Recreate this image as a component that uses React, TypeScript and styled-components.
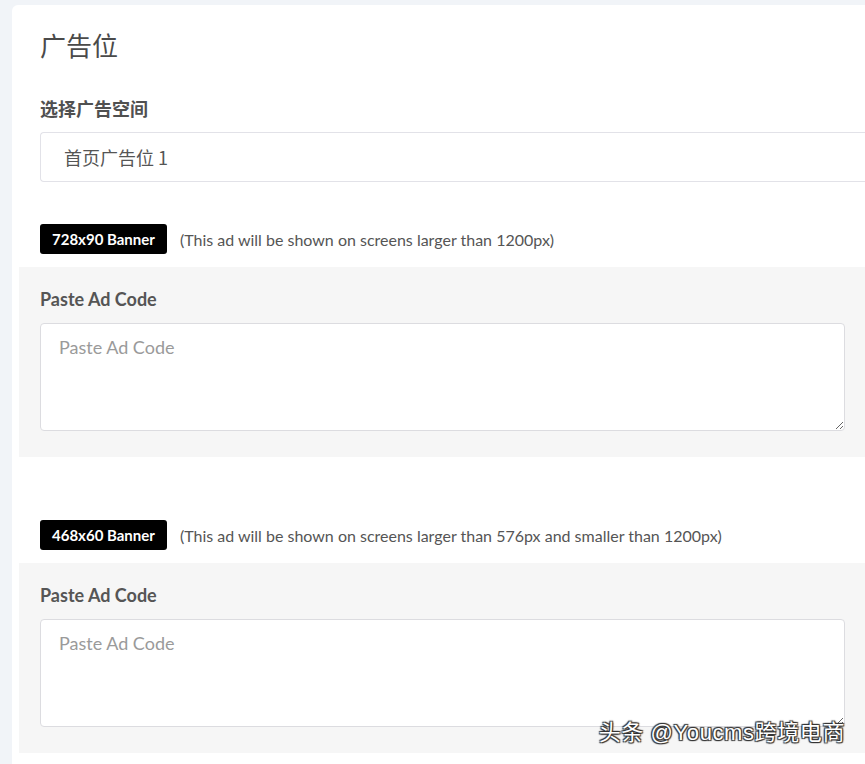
import styled, { createGlobalStyle } from "styled-components";

const GlobalStyle = createGlobalStyle`
  html, body {
    margin: 0;
    padding: 0;
    background: #f1f4f8;
    overflow: hidden;
  }
  body {
    font-family: "Lato", "Noto Sans CJK SC", sans-serif;
  }
`;

const Page = styled.div`
  width: 865px;
  height: 764px;
  position: relative;
  overflow: hidden;
  padding: 5px 0 0 12px;
  box-sizing: border-box;
`;

const Card = styled.div`
  width: 900px;
  background: #fff;
  border-radius: 6px 0 0 0;
  padding: 22px 0 40px 28px;
  box-sizing: border-box;
`;

const Title = styled.h2`
  margin: 0;
  font-family: "Noto Sans CJK SC", sans-serif;
  font-size: 26px;
  line-height: 36px;
  font-weight: 400;
  color: #4a4a4a;
`;

const FieldLabel = styled.div`
  margin-top: 32px;
  font-family: "Noto Sans CJK SC", sans-serif;
  font-size: 18px;
  line-height: 26px;
  font-weight: 700;
  color: #505050;
`;

const Select = styled.div`
  margin-top: 11px;
  height: 50px;
  border: 1px solid #e2e2e8;
  border-right: none;
  border-radius: 4px 0 0 4px;
  box-sizing: border-box;
  display: flex;
  align-items: center;
  padding-left: 23px;
  font-family: "Noto Sans CJK SC", sans-serif;
  font-size: 18px;
  color: #555;
`;

const BannerRow = styled.div<{ $top: number }>`
  margin-top: ${(p) => p.$top}px;
  height: 30px;
  display: flex;
  align-items: center;
  gap: 13px;
`;

const Badge = styled.span`
  height: 30px;
  padding: 0 12px;
  display: inline-flex;
  align-items: center;
  background: #000;
  color: #fff;
  border-radius: 3px;
  font-size: 15px;
  font-weight: 700;
`;

const Note = styled.span`
  font-size: 16px;
  color: #555;
`;

const Panel = styled.div`
  margin: 13px 0 0 -21px;
  width: 847px;
  background: #f6f6f6;
  padding: 20px 21px 26px;
  box-sizing: border-box;
`;

const PanelLabel = styled.div`
  font-size: 18px;
  line-height: 24px;
  font-weight: 700;
  color: #555;
`;

const CodeArea = styled.textarea`
  display: block;
  margin-top: 12px;
  width: 100%;
  height: 108px;
  box-sizing: border-box;
  border: 1px solid #dcdce0;
  border-radius: 4px;
  padding: 12px 18px;
  font-family: "Lato", sans-serif;
  font-size: 18px;
  background: #fff;
  outline: none;
  resize: vertical;
  &::placeholder {
    color: #9a9a9a;
  }
`;

const Watermark = styled.div`
  position: absolute;
  right: 20px;
  bottom: 18px;
  font-family: "Liberation Sans", "Noto Sans CJK SC", sans-serif;
  font-size: 22px;
  letter-spacing: 0.6px;
  color: #fff;
  text-shadow: 0 0 1px #333, 1px 1px 1px #333, -1px -1px 1px #333, 1px -1px 1px #333,
    -1px 1px 1px #333;
`;

const banners = [
  { name: "728x90 Banner", note: "(This ad will be shown on screens larger than 1200px)", top: 42 },
  {
    name: "468x60 Banner",
    note: "(This ad will be shown on screens larger than 576px and smaller than 1200px)",
    top: 63,
  },
];

export default function App() {
  return (
    <Page>
      <GlobalStyle />
      <Card>
        <Title>广告位</Title>
        <FieldLabel>选择广告空间</FieldLabel>
        <Select>首页广告位 1</Select>
        {banners.map((b) => (
          <div key={b.name}>
            <BannerRow $top={b.top}>
              <Badge>{b.name}</Badge>
              <Note>{b.note}</Note>
            </BannerRow>
            <Panel>
              <PanelLabel>Paste Ad Code</PanelLabel>
              <CodeArea placeholder="Paste Ad Code" />
            </Panel>
          </div>
        ))}
      </Card>
      <Watermark>头条 @Youcms跨境电商</Watermark>
    </Page>
  );
}
